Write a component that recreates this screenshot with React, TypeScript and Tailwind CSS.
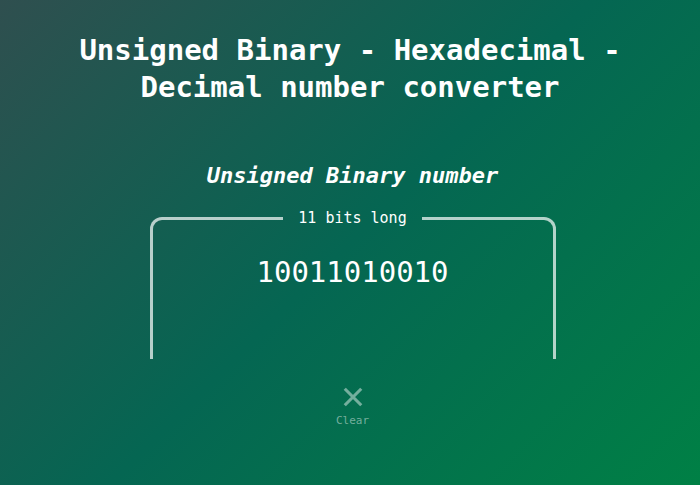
import React from 'react';

const mono = { fontFamily: '"DejaVu Sans Mono", "Liberation Mono", monospace' };

const App: React.FC = () => {
  const binary = '10011010010';

  return (
    <div
      className="w-[700px] h-[485px] bg-linear-135/srgb from-[#2f4f4f] via-[#056652] to-[#008045] text-white flex flex-col items-center overflow-hidden"
      style={mono}
    >
      {/* Title */}
      <h1 className="mt-[32px] text-[29px] leading-[37px] font-bold text-center">
        Unsigned Binary - Hexadecimal -<br />
        Decimal number converter
      </h1>

      <div className="pl-[5px] flex flex-col items-center">
        {/* Section heading */}
        <h2 className="mt-[56px] text-[22px] leading-[28px] font-bold italic">Unsigned Binary number</h2>

        {/* Value box */}
        <fieldset className="mt-[19px] w-[406px] h-[150px] border-[3px] border-b-0 border-white/70 rounded-t-[12px] px-4">
          <legend className="mx-auto px-[15px] text-[15px] leading-[18px]">{binary.length} bits long</legend>
          <div className="mt-[27px] text-center text-[29px] leading-[36px]">{binary}</div>
        </fieldset>

        {/* Clear button */}
        <button className="mt-[27px] flex flex-col items-center text-white/45">
          <svg width="22" height="22" viewBox="0 0 24 24" fill="none" stroke="currentColor" strokeWidth="3.4" strokeLinecap="butt">
            <path d="M3 3L21 21M21 3L3 21" />
          </svg>
          <span className="mt-[6px] text-[11px] leading-[14px]">Clear</span>
        </button>
      </div>
    </div>
  );
};

export default App;
